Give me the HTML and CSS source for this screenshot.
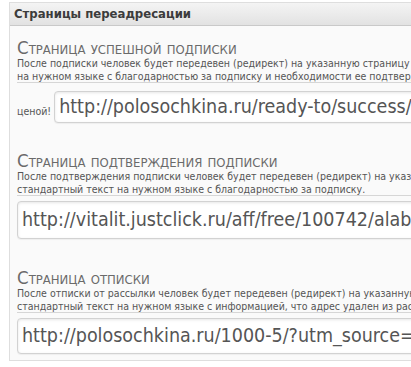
FILE: index.html
```html
<!DOCTYPE html>
<html lang="ru">
<head>
<meta charset="utf-8">
<link rel="stylesheet" href="styles.css">
</head>
<body>
<div class="panel">
  <div class="panel-head">Страницы переадресации</div>
  <div class="panel-body">
    <div class="section s1">
      <div class="title">Страница успешной подписки</div>
      <div class="desc">
        <div class="line">После подписки человек будет передевен (редирект) на указанную страницу в случае</div>
        <div class="line ul">на нужном языке с благодарностью за подписку и необходимости ее подтвердить</div>
      </div>
      <div class="row">
        <span class="tail">ценой!</span>
        <div class="input in1">http://polosochkina.ru/ready-to/success/</div>
      </div>
    </div>
    <div class="section s2">
      <div class="title">Страница подтверждения подписки</div>
      <div class="desc">
        <div class="line">После подтверждения подписки человек будет передевен (редирект) на указанную</div>
        <div class="line ul">стандартный текст на нужном языке с благодарностью за подписку.</div>
      </div>
      <div class="input in2">http://vitalit.justclick.ru/aff/free/100742/alabuga/</div>
    </div>
    <div class="section s3">
      <div class="title">Страница отписки</div>
      <div class="desc">
        <div class="line">После отписки от рассылки человек будет передевен (редирект) на указанную</div>
        <div class="line ul">стандартный текст на нужном языке с информацией, что адрес удален из рассылки.</div>
      </div>
      <div class="input in3">http://polosochkina.ru/1000-5/?utm_source=</div>
    </div>
  </div>
</div>
</body>
</html>
```

FILE: styles.css
```css
html, body {
  margin: 0;
  padding: 0;
  background: #ffffff;
  overflow: hidden;
}
body {
  width: 411px;
  height: 367px;
  font-family: "DejaVu Sans Condensed", "DejaVu Sans", sans-serif;
}
.panel {
  margin: 2px 0 0 9px;
  width: 800px;
  border: 1px solid #dedede;
  background: #fafafa;
}
.panel-head {
  height: 22px;
  line-height: 22px;
  padding-left: 4px;
  background: linear-gradient(#f4f4f4, #e2e2e2);
  border-bottom: 1px solid #c9c9c9;
  font-size: 13px;
  font-weight: bold;
  color: #3c3c3c;
  white-space: nowrap;
}
.panel-body {
  padding: 14px 0 6px 7px;
}
.section {
  white-space: nowrap;
}
.s2 { margin-top: 30px; }
.s3 { margin-top: 31px; }
.title {
  font-size: 18.5px;
  line-height: 16px;
  font-variant: small-caps;
  color: #6a6a6a;
}
.desc {
  font-size: 10.5px;
  line-height: 13px;
  color: #555;
  margin-top: 1px;
}
.ul {
  height: 12px;
  border-bottom: 1px solid #d6d6d6;
}
.row {
  display: flex;
  align-items: flex-end;
  gap: 3px;
  margin-top: 8px;
}
.tail {
  font-size: 10.5px;
  color: #555;
  line-height: 13px;
  padding-bottom: 5px;
}
.input {
  box-sizing: border-box;
  padding-left: 4px;
  border: 1px solid #d2d2d2;
  border-radius: 4px;
  background: #ffffff;
  box-shadow: inset 0 1px 3px rgba(0,0,0,0.10), 0 1px 1px rgba(0,0,0,0.05);
  font-size: 19.5px;
  color: #555;
  width: 700px;
}
.in1 {
  height: 32px;
  line-height: 29px;
}
.in2 {
  margin-top: 5px;
  height: 38px;
  line-height: 36px;
}
.in3 {
  margin-top: 5px;
  height: 36px;
  line-height: 34px;
}
```
